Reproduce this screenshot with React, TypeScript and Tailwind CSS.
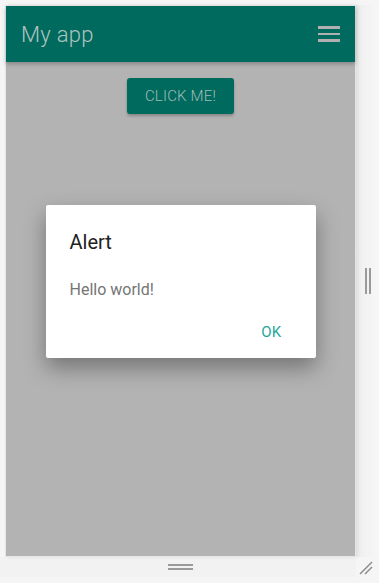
import React from "react";

const App = () => {
  return (
    <div
      className="w-[379px] h-[583px] bg-[#f5f5f5] flex flex-col overflow-hidden relative"
      style={{ fontFamily: "Roboto, 'Noto Sans', 'Liberation Sans', sans-serif" }}
    >
      <div className="flex flex-1 pt-[5px] pl-[5px]">
        {/* Device frame */}
        <div className="w-[351px] h-[552px] border border-[#e6e6e6] flex flex-col relative shadow-[2px_0_4px_rgba(0,0,0,0.08)]">
          <header className="h-[56px] bg-[#006a5e] flex items-center justify-between pl-[15px] pr-[15px] shadow-[0_2px_4px_rgba(0,0,0,0.25)] z-10">
            <span className="text-[22px] text-[#b0c4bf] font-light tracking-[0.3px]">My app</span>
            <div className="flex flex-col gap-[4px]">
              <span className="block w-[22px] h-[2.5px] bg-[#b0b0b0]" />
              <span className="block w-[22px] h-[2.5px] bg-[#b0b0b0]" />
              <span className="block w-[22px] h-[2.5px] bg-[#b0b0b0]" />
            </div>
          </header>
          <main className="flex-1 bg-[#b3b3b3] flex flex-col items-center pt-[16px] relative">
            <button className="w-[107px] h-[36px] rounded-[3px] bg-[#006a5e] text-[#9fbcb7] text-[15px] font-light shadow-[0_2px_3px_rgba(0,0,0,0.25)] tracking-[0.2px]">
              CLICK ME!
            </button>
            {/* Dialog */}
            <div className="mt-[91px] w-[270px] h-[153px] bg-white rounded-[2px] shadow-[0_10px_22px_rgba(0,0,0,0.35)] flex flex-col pl-[24px] pr-[24px] pt-[25px]">
              <div className="text-[20px] text-[#212121] leading-[24px]">Alert</div>
              <div className="mt-[26px] text-[16px] text-[#757575] leading-[20px]">Hello world!</div>
              <div className="flex justify-end mt-[21px] pr-[10px]">
                <span className="text-[15px] text-[#26a69a] tracking-[0.3px]">OK</span>
              </div>
            </div>
          </main>
        </div>
        {/* Right gutter */}
        <div className="flex-1 flex items-center justify-center h-[552px] bg-gradient-to-r from-[#eeeeee] to-[#f7f7f7]">
          <div className="flex gap-[2px] h-[26px]">
            <span className="block w-[2px] h-full bg-[#9a9a9a]" />
            <span className="block w-[2px] h-full bg-[#9a9a9a]" />
          </div>
        </div>
      </div>
      {/* Bottom gutter */}
      <div className="h-[26px] flex flex-col">
        <div className="h-[20px] bg-[#f2f2f2] flex items-center justify-center w-[356px] pl-[5px]">
          <div className="flex flex-col gap-[2px] w-[25px]">
            <span className="block h-[2px] w-full bg-[#9a9a9a]" />
            <span className="block h-[2px] w-full bg-[#9a9a9a]" />
          </div>
        </div>
      </div>
      <svg className="absolute right-[6px] bottom-[8px]" width="14" height="14" viewBox="0 0 14 14">
        <line x1="1" y1="13" x2="13" y2="1" stroke="#8a8a8a" strokeWidth="1.4" />
        <line x1="6" y1="13" x2="13" y2="6" stroke="#8a8a8a" strokeWidth="1.4" />
      </svg>
    </div>
  );
};

export default App;
